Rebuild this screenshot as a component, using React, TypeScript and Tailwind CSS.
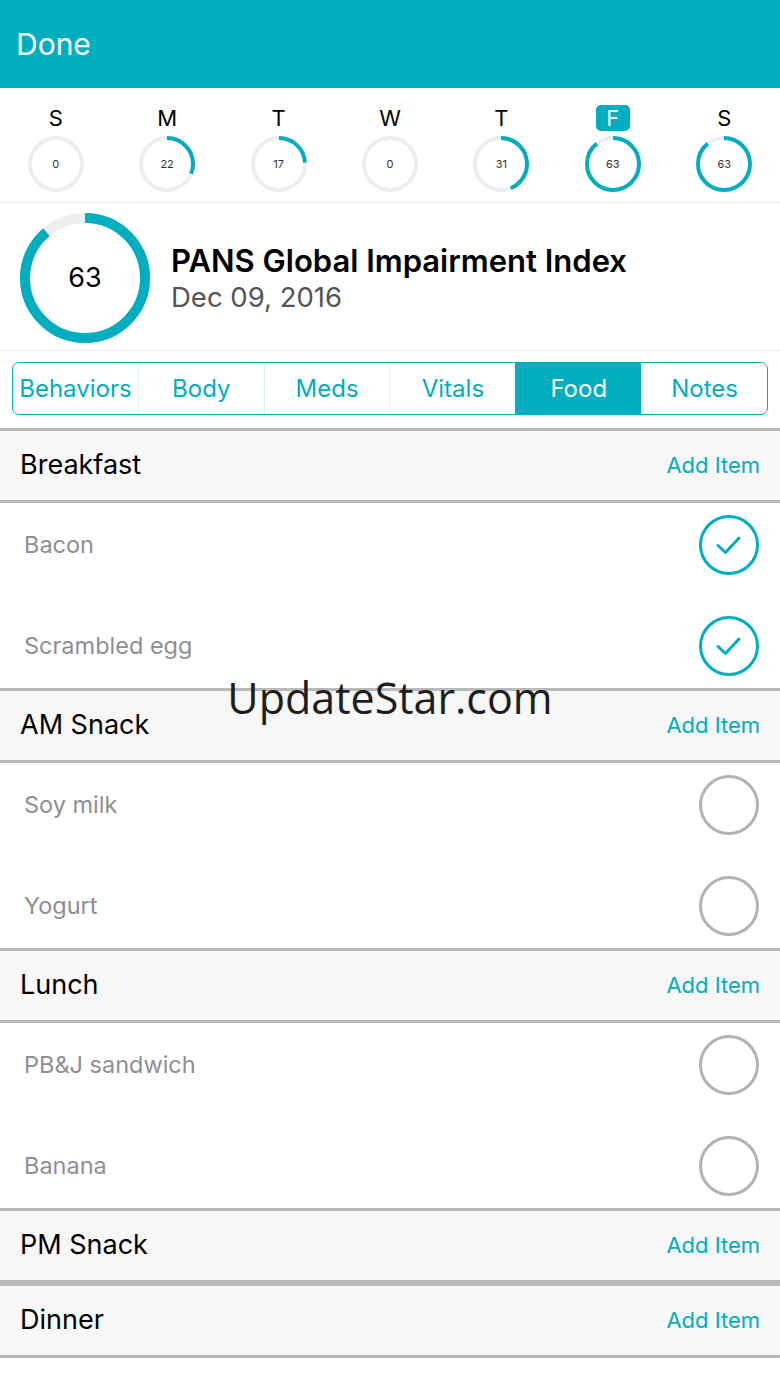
import React from "react";

const TEAL = "#00aebf";

function Ring({ size, stroke, value, max, label, labelClass }: { size: number; stroke: number; value: number; max: number; label: string; labelClass: string }) {
  const r = (size - stroke) / 2;
  const c = 2 * Math.PI * r;
  const frac = Math.min(value / max, 1);
  return (
    <div className="relative flex items-center justify-center" style={{ width: size, height: size }}>
      <svg width={size} height={size} className="absolute inset-0 -rotate-90">
        <circle cx={size / 2} cy={size / 2} r={r} fill="none" stroke="#eeeef1" strokeWidth={stroke} />
        {frac > 0 && (
          <circle
            cx={size / 2}
            cy={size / 2}
            r={r}
            fill="none"
            stroke={TEAL}
            strokeWidth={stroke}
            strokeDasharray={`${c * frac} ${c}`}
          />
        )}
      </svg>
      <span className={labelClass}>{label}</span>
    </div>
  );
}

const days = [
  { d: "S", v: 0 },
  { d: "M", v: 22 },
  { d: "T", v: 17 },
  { d: "W", v: 0 },
  { d: "T", v: 31 },
  { d: "F", v: 63, sel: true },
  { d: "S", v: 63 },
];

const tabs = ["Behaviors", "Body", "Meds", "Vitals", "Food", "Notes"];

const sections: { name: string; items: { n: string; done: boolean }[] }[] = [
  { name: "Breakfast", items: [{ n: "Bacon", done: true }, { n: "Scrambled egg", done: true }] },
  { name: "AM Snack", items: [{ n: "Soy milk", done: false }, { n: "Yogurt", done: false }] },
  { name: "Lunch", items: [{ n: "PB&J sandwich", done: false }, { n: "Banana", done: false }] },
  { name: "PM Snack", items: [] },
  { name: "Dinner", items: [] },
];

function Check({ done }: { done: boolean }) {
  return (
    <svg width="62" height="62" viewBox="0 0 62 62">
      <circle cx="31" cy="31" r="28.5" fill="none" stroke={done ? TEAL : "#b3b3b3"} strokeWidth="3" />
      {done && (
        <path d="M20 31.5 L27.5 38.5 L41 24" fill="none" stroke={TEAL} strokeWidth="3" strokeLinecap="round" strokeLinejoin="round" />
      )}
    </svg>
  );
}

export default function App() {
  return (
    <div className="relative w-[780px] min-h-[1387px] bg-white" style={{ fontFamily: "Inter, 'Noto Sans', sans-serif" }}>
      {/* Nav bar */}
      <div className="h-[88px] bg-[#00aebf] flex items-center px-[16px]">
        <span className="text-white text-[30px] leading-none">Done</span>
      </div>

      {/* Week */}
      <div className="grid grid-cols-7 pt-[16px] pb-[10px] border-b border-[#e9e9ec]">
        {days.map((x, i) => (
          <div key={i} className="flex flex-col items-center">
            <div className="h-[27px] flex items-center justify-center">
              {x.sel ? (
                <span className="w-[34px] h-[26px] rounded-[5px] bg-[#00aebf] text-white text-[22px] leading-none flex items-center justify-center">{x.d}</span>
              ) : (
                <span className="text-[22px] leading-none text-black">{x.d}</span>
              )}
            </div>
            <div className="mt-[5px]">
              <Ring size={56} stroke={4} value={x.v} max={71} label={String(x.v)} labelClass="text-[11px] text-[#333]" />
            </div>
          </div>
        ))}
      </div>

      {/* Index */}
      <div className="flex items-center px-[20px] pt-[10px] pb-[7px] border-b border-[#ececef]">
        <Ring size={130} stroke={10} value={63} max={71} label="63" labelClass="text-[27px] text-black" />
        <div className="ml-[21px] flex flex-col">
          <span className="text-[31px] font-semibold text-black leading-[36px]">PANS Global Impairment Index</span>
          <span className="text-[27.5px] text-[#555] leading-[32px] mt-[2px]">Dec 09, 2016</span>
        </div>
      </div>

      {/* Segmented control */}
      <div className="px-[12px] pt-[11px] pb-[13px]">
        <div className="flex h-[53px] border-[1.5px] border-[#00aebf] rounded-[7px] overflow-hidden">
          {tabs.map((t, i) => (
            <div
              key={t}
              className={`flex-1 flex items-center justify-center text-[24px] whitespace-nowrap ${t === "Food" ? "bg-[#00aebf] text-white" : "text-[#00aebf]"} ${i > 0 ? "border-l border-[#00aebf]/15" : ""}`}
            >
              {t}
            </div>
          ))}
        </div>
      </div>

      {/* Sections */}
      {sections.map((s) => (
        <div key={s.name}>
          <div className="h-[75px] bg-[#f7f7f7] border-y-[3px] border-[#b9b9b9] flex items-center justify-between px-[20px]">
            <span className="text-[27px] text-black">{s.name}</span>
            <span className="text-[22px] text-[#00aebf]">Add Item</span>
          </div>
          {s.items.length > 0 && (
            <div className="flex flex-col gap-[17px] h-[185px]">
              {s.items.map((it) => (
                <div key={it.n} className="h-[84px] flex items-center justify-between pl-[24px] pr-[20px]">
                  <span className="text-[23.5px] text-[#8e8e93]">{it.n}</span>
                  <Check done={it.done} />
                </div>
              ))}
            </div>
          )}
        </div>
      ))}

      {/* Watermark */}
      <div className="absolute left-0 right-0 top-[668px] flex justify-center pointer-events-none">
        <span className="text-[43px] text-[#1e1e1e] leading-[60px]" style={{ fontFamily: "'Open Sans', sans-serif" }}>UpdateStar.com</span>
      </div>
    </div>
  );
}
